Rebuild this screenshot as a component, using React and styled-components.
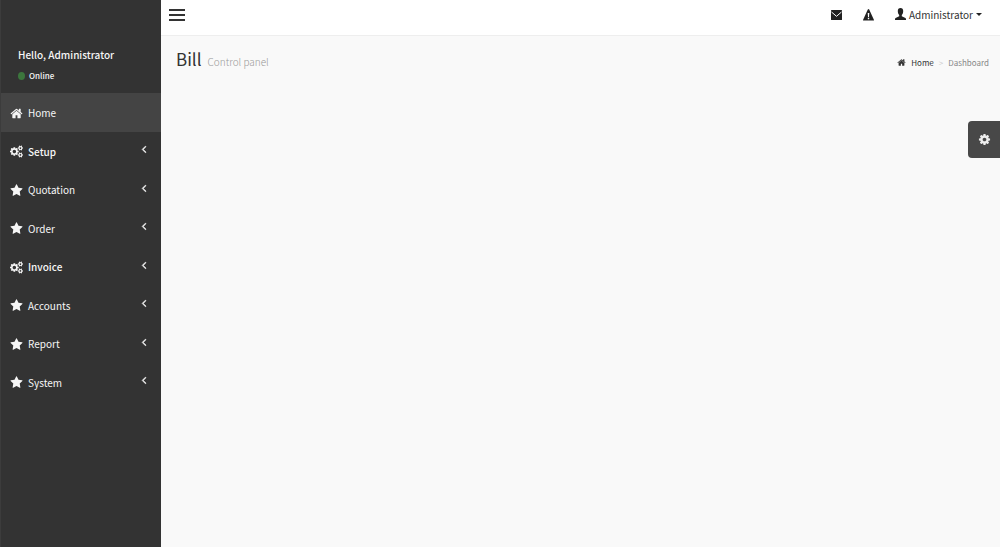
import React from "react";
import styled, { createGlobalStyle } from "styled-components";

const GlobalStyle = createGlobalStyle`
  * {
    box-sizing: border-box;
  }

  body {
    margin: 0;
    background: #f9f9f9;
    color: #333;
    font-family: "Noto Sans CJK SC", "Noto Sans", sans-serif;
    font-size: 10px;
    line-height: 16px;
  }

  a {
    color: inherit;
    text-decoration: none;
  }

  button {
    padding: 0;
    border: 0;
    background: none;
    color: inherit;
    font: inherit;
    cursor: pointer;
  }

  svg {
    display: block;
    flex: none;
  }
`;

const Wrapper = styled.div`
  display: flex;
  min-height: 100vh;
`;

const Sidebar = styled.aside`
  flex: none;
  width: 161px;
  background: #333;
  border-left: 1px solid #3c3c3c;
  color: #f6f6f6;
`;

const UserPanel = styled.div`
  padding: 47px 17px 9px;
`;

const Hello = styled.p`
  margin: 0 0 5px;
  font-weight: 500;
`;

const Status = styled.a`
  display: flex;
  align-items: center;
  gap: 4px;
  font-size: 8px;
  font-weight: 500;
`;

const Dot = styled.span`
  width: 7px;
  height: 8px;
  border-radius: 50%;
  background: #3c763d;
`;

const Menu = styled.ul`
  display: grid;
  grid-auto-rows: 1fr;
  height: 308px;
  margin: 0;
  padding: 0;
  list-style: none;
`;

const MenuLink = styled.a`
  display: flex;
  align-items: center;
  height: 100%;
  padding: 2px 11px 0 9px;
  background: ${(props) => (props.$active ? `#444` : `transparent`)};
  font-weight: ${(props) => (props.$bold ? `500` : `400`)};
`;

const MenuText = styled.span`
  flex: 1;
  padding-left: 5px;
`;

const Arrow = styled.span`
  padding-bottom: 5px;
  stroke: currentColor;
  stroke-width: 80px;
`;

const Main = styled.div`
  flex: 1;
  min-width: 0;
`;

const Header = styled.header`
  display: flex;
  align-items: center;
  justify-content: space-between;
  height: 36px;
  padding: 0 18px 6px 8px;
  background: #fff;
  border-bottom: 1px solid #eee;
`;

const Toggle = styled.button`
  display: grid;
  gap: 3px;
  width: 16px;

  span {
    height: 2px;
    background: #333;
  }
`;

const HeaderNav = styled.nav`
  display: flex;
  align-items: center;
`;

const IconButton = styled.button`
  margin-right: 21px;
`;

const Account = styled.button`
  display: flex;
  align-items: center;
  gap: 3px;
`;

const Caret = styled.span`
  border: 3px solid transparent;
  border-top-color: #222;
  border-bottom: 0;
`;

const ContentHeader = styled.section`
  display: flex;
  align-items: center;
  justify-content: space-between;
  padding: 11px 11px 0 15px;
`;

const Title = styled.h1`
  display: flex;
  align-items: baseline;
  gap: 6px;
  margin: 0;
  font-size: 17px;
  font-weight: 400;
  line-height: 24px;

  small {
    color: #999;
    font-size: 10px;
    font-weight: 300;
  }
`;

const Breadcrumb = styled.ol`
  display: flex;
  align-items: center;
  gap: 5px;
  margin: 0;
  padding: 4px 0 0;
  list-style: none;
  font-size: 8px;
  color: #888;

  a {
    display: flex;
    align-items: center;
    gap: 5px;
    color: #333;
  }
`;

const Divider = styled.li`
  color: #ccc;
`;

const SettingsButton = styled.button`
  position: fixed;
  top: 121px;
  right: 0;
  display: flex;
  align-items: center;
  justify-content: center;
  width: 32px;
  height: 37px;
  border-radius: 4px 0 0 4px;
  background: #484848;
  color: #eee;
`;

const paths = {
  home: "M1472 992v480q0 26-19 45t-45 19h-384v-384h-256v384h-384q-26 0-45-19t-19-45v-480q0-1 .5-3t.5-3l575-474 575 474q1 2 1 6zm223-69l-62 74q-8 9-21 11h-3q-13 0-21-7l-692-577-692 577q-12 8-24 7-13-2-21-11l-62-74q-8-10-7-23.5t11-21.5l719-599q32-26 76-26t76 26l244 204v-195q0-14 9-23t23-9h192q14 0 23 9t9 23v408l219 182q10 8 11 21.5t-7 23.5z",
  star: "M1728 647q0 22-26 48l-363 354 86 500q1 7 1 20 0 21-10.5 35.5t-30.5 14.5q-19 0-40-12l-449-236-449 236q-22 12-40 12-21 0-31.5-14.5t-10.5-35.5q0-6 2-20l86-500-364-354q-25-27-25-48 0-37 56-46l502-73 225-455q19-41 49-41t49 41l225 455 502 73q56 9 56 46z",
  angle:
    "M1203 544q0 13-10 23l-393 393 393 393q10 10 10 23t-10 23l-50 50q-10 10-23 10t-23-10l-466-466q-10-10-10-23t10-23l466-466q10-10 23-10t23 10l50 50q10 10 10 23z",
  cog: "M1152 896q0-106-75-181t-181-75-181 75-75 181 75 181 181 75 181-75 75-181zm512-109v222q0 12-8 23t-20 13l-185 28q-19 54-39 91 35 50 107 138 10 12 10 25t-9 23q-27 37-99 108t-94 71q-12 0-26-9l-138-108q-44 23-91 38-16 136-29 186-7 28-36 28h-222q-14 0-24.5-8.5t-11.5-21.5l-28-184q-49-16-90-37l-141 107q-10 9-25 9-14 0-25-11-126-114-165-168-7-10-7-23 0-12 8-23 15-21 51-66.5t54-70.5q-27-50-41-99l-183-27q-13-2-21-12.5t-8-23.5v-222q0-12 8-23t19-13l186-28q14-46 39-92-40-57-107-138-10-12-10-24 0-10 9-23 26-36 98.5-107.5t94.5-71.5q13 0 26 10l138 107q44-23 91-38 16-136 29-186 7-28 36-28h222q14 0 24.5 8.5t11.5 21.5l28 184q49 16 90 37l142-107q9-9 24-9 13 0 25 10 129 119 165 170 7 8 7 22 0 12-8 23-15 21-51 66.5t-54 70.5q26 50 41 98l183 28q13 2 21 12.5t8 23.5z",
  cogs: "M896 896q0-106-75-181t-181-75-181 75-75 181 75 181 181 75 181-75 75-181zm768 512q0-52-38-90t-90-38-90 38-38 90q0 53 37.5 90.5t90.5 37.5 90.5-37.5 37.5-90.5zm0-1024q0-52-38-90t-90-38-90 38-38 90q0 53 37.5 90.5t90.5 37.5 90.5-37.5 37.5-90.5zm-384 421v185q0 10-7 19.5t-16 10.5l-155 24q-11 35-32 76 34 48 90 115 7 11 7 20 0 12-7 19-23 30-82.5 89.5t-78.5 59.5q-11 0-21-7l-115-90q-37 19-77 31-11 108-23 155-7 24-30 24h-186q-11 0-20-7.5t-10-17.5l-23-153q-34-10-75-31l-118 89q-7 7-20 7-11 0-21-8-144-133-144-160 0-9 7-19 10-14 41-53t47-61q-23-44-35-82l-152-24q-10-1-17-9.5t-7-19.5v-185q0-10 7-19.5t16-10.5l155-24q11-35 32-76-34-48-90-115-7-11-7-20 0-12 7-20 22-30 82-89t79-59q11 0 21 7l115 90q34-18 77-32 11-108 23-154 7-24 30-24h186q11 0 20 7.5t10 17.5l23 153q34 10 75 31l118-89q8-7 20-7 11 0 21 8 144 133 144 160 0 8-7 19-12 16-42 54t-45 60q23 48 34 82l152 23q10 2 17 10.5t7 19.5zm640 533v140q0 16-149 31-12 27-30 52 51 113 51 138 0 4-4 7-122 71-124 71-8 0-46-47t-52-68q-20 2-30 2t-30-2q-14 21-52 68t-46 47q-2 0-124-71-4-3-4-7 0-25 51-138-18-25-30-52-149-15-149-31v-140q0-16 149-31 13-29 30-52-51-113-51-138 0-4 4-7 4-2 35-20t59-34 30-16q8 0 46 46.5t52 67.5q20-2 30-2t30 2q51-71 92-112l6-2q4 0 124 70 4 3 4 7 0 25-51 138 17 23 30 52 149 15 149 31zm0-1024v140q0 16-149 31-12 27-30 52 51 113 51 138 0 4-4 7-122 71-124 71-8 0-46-47t-52-68q-20 2-30 2t-30-2q-14 21-52 68t-46 47q-2 0-124-71-4-3-4-7 0-25 51-138-18-25-30-52-149-15-149-31v-140q0-16 149-31 13-29 30-52-51-113-51-138 0-4 4-7 4-2 35-20t59-34 30-16q8 0 46 46.5t52 67.5q20-2 30-2t30 2q51-71 92-112l6-2q4 0 124 70 4 3 4 7 0 25-51 138 17 23 30 52 149 15 149 31z",
};

const Icon = ({ name, size = 13 }) => (
  <svg
    width={size}
    height={size}
    viewBox={name === "cogs" ? "0 0 1920 1792" : "0 0 1792 1792"}
    fill="currentColor"
    aria-hidden="true"
  >
    <path d={paths[name]} />
  </svg>
);

const MailIcon = () => (
  <svg width="11" height="10" viewBox="0 0 11 10">
    <rect width="11" height="10" rx="0.5" fill="#222" />
    <path d="M0.5 2L5.5 6.300L10.5 2" fill="none" stroke="#fff" />
  </svg>
);

const WarningIcon = () => (
  <svg width="11" height="12" viewBox="0 0 11 12" fill="#222">
    <path
      fillRule="evenodd"
      d="M4.800 .5Q5.500 -.3 6.200 .5L11 11Q11 11.600 10.500 11.600H.5Q0 11.600 0 11ZM4.700 4L5 8H6L6.300 4ZM4.800 8.800V10.200H6.200V8.800Z"
    />
  </svg>
);

const UserIcon = () => (
  <svg width="11" height="13" viewBox="0 0 11 13" fill="#222">
    <path d="M5.500 0C7.300 0 8.200 1.200 8.200 3C8.200 5 7.600 6 6.800 7V8.300L10.400 10Q11 10.400 11 11V12H0V11Q0 10.400 .6 10L4.200 8.300V7C3.400 6 2.800 5 2.800 3C2.800 1.200 3.700 0 5.500 0Z" />
  </svg>
);

const menus = [
  { name: "Home", icon: "home", active: true },
  { name: "Setup", icon: "cogs", bold: true },
  { name: "Quotation", icon: "star" },
  { name: "Order", icon: "star" },
  { name: "Invoice", icon: "cogs", bold: true },
  { name: "Accounts", icon: "star" },
  { name: "Report", icon: "star" },
  { name: "System", icon: "star" },
];

const App = () => {
  return (
    <>
      <GlobalStyle />
      <Wrapper>
        <Sidebar>
          <UserPanel>
            <Hello>Hello, Administrator</Hello>
            <Status href="#">
              <Dot />
              Online
            </Status>
          </UserPanel>

          <Menu>
            {menus.map((menu) => (
              <li key={menu.name}>
                <MenuLink href="#" $active={menu.active} $bold={menu.bold}>
                  <Icon name={menu.icon} />
                  <MenuText>{menu.name}</MenuText>
                  {!menu.active && (
                    <Arrow>
                      <Icon name="angle" size={12} />
                    </Arrow>
                  )}
                </MenuLink>
              </li>
            ))}
          </Menu>
        </Sidebar>

        <Main>
          <Header>
            <Toggle aria-label="Toggle navigation">
              <span />
              <span />
              <span />
            </Toggle>

            <HeaderNav>
              <IconButton aria-label="Messages">
                <MailIcon />
              </IconButton>
              <IconButton aria-label="Warnings">
                <WarningIcon />
              </IconButton>
              <Account>
                <UserIcon />
                Administrator
                <Caret />
              </Account>
            </HeaderNav>
          </Header>

          <ContentHeader>
            <Title>
              Bill <small>Control panel</small>
            </Title>

            <Breadcrumb>
              <li>
                <a href="#">
                  <Icon name="home" size={9} />
                  Home
                </a>
              </li>
              <Divider>&gt;</Divider>
              <li>Dashboard</li>
            </Breadcrumb>
          </ContentHeader>
        </Main>
      </Wrapper>

      <SettingsButton aria-label="Settings">
        <Icon name="cog" />
      </SettingsButton>
    </>
  );
};

export default App;
